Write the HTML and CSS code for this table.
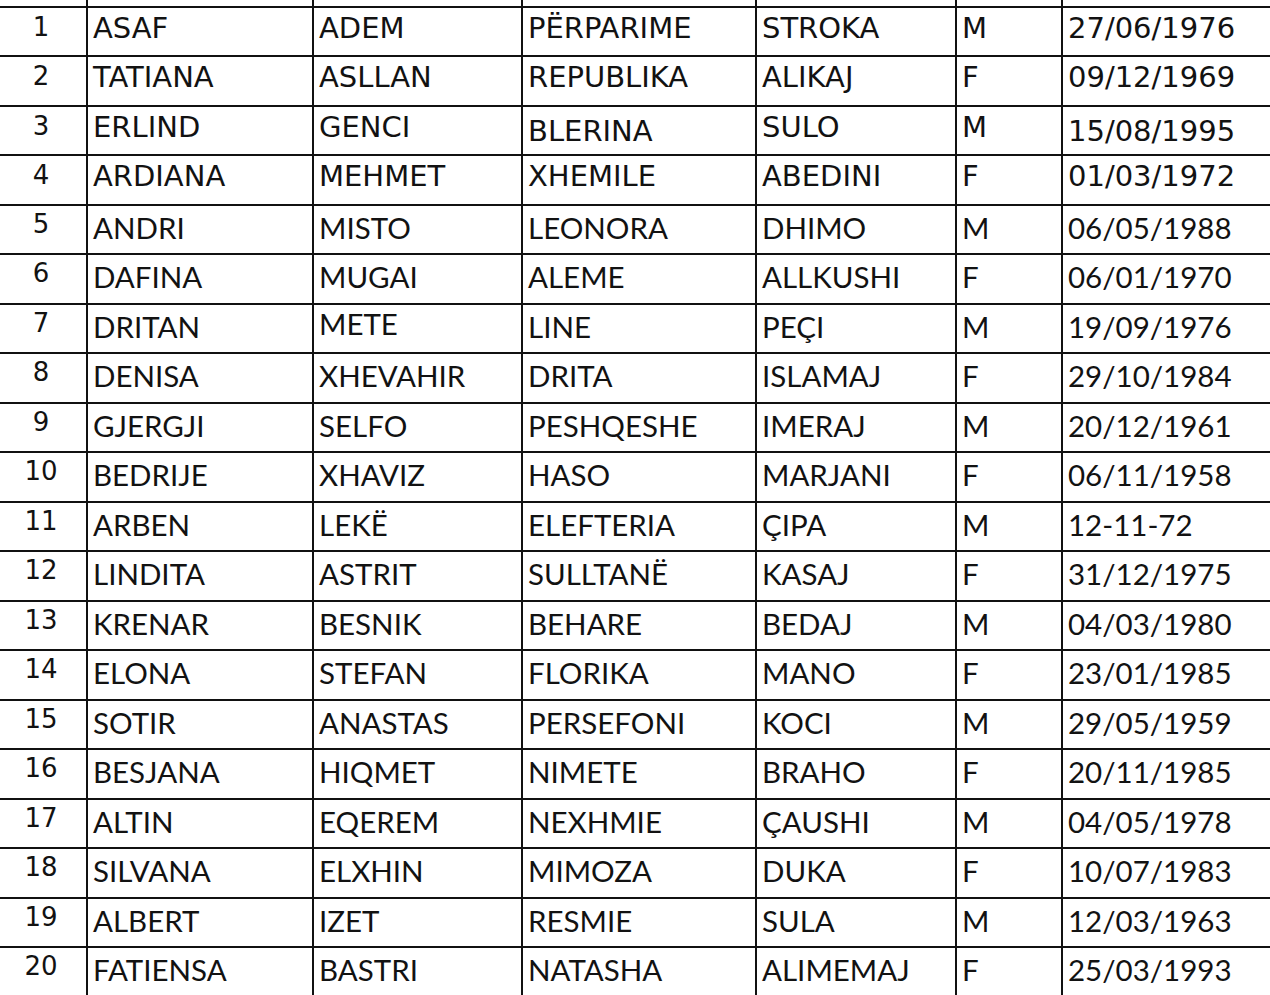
FILE: index.html
```html
<!DOCTYPE html>
<html lang="sq">
<head>
<meta charset="utf-8">
<title>Lista</title>
<link rel="stylesheet" href="styles.css">
</head>
<body>
<div class="sheet">
  <div class="row ghost"><div class="c num"></div><div class="c"></div><div class="c"></div><div class="c"></div><div class="c"></div><div class="c"></div><div class="c"></div></div>

  <div class="row t"><div class="c num">1</div><div class="c">ASAF</div><div class="c">ADEM</div><div class="c">PËRPARIME</div><div class="c">STROKA</div><div class="c">M</div><div class="c">27/06/1976</div></div>
  <div class="row t"><div class="c num">2</div><div class="c">TATIANA</div><div class="c">ASLLAN</div><div class="c">REPUBLIKA</div><div class="c">ALIKAJ</div><div class="c">F</div><div class="c">09/12/1969</div></div>
  <div class="row t"><div class="c num">3</div><div class="c">ERLIND</div><div class="c">GENCI</div><div class="c down">BLERINA</div><div class="c">SULO</div><div class="c">M</div><div class="c down">15/08/1995</div></div>
  <div class="row t"><div class="c num">4</div><div class="c">ARDIANA</div><div class="c">MEHMET</div><div class="c">XHEMILE</div><div class="c">ABEDINI</div><div class="c">F</div><div class="c">01/03/1972</div></div>

  <div class="row k"><div class="c num">5</div><div class="c">ANDRI</div><div class="c">MISTO</div><div class="c">LEONORA</div><div class="c">DHIMO</div><div class="c">M</div><div class="c">06/05/1988</div></div>
  <div class="row k"><div class="c num">6</div><div class="c">DAFINA</div><div class="c">MUGAI</div><div class="c">ALEME</div><div class="c">ALLKUSHI</div><div class="c">F</div><div class="c">06/01/1970</div></div>
  <div class="row k"><div class="c num">7</div><div class="c">DRITAN</div><div class="c up">METE</div><div class="c">LINE</div><div class="c">PEÇI</div><div class="c">M</div><div class="c">19/09/1976</div></div>
  <div class="row k"><div class="c num">8</div><div class="c">DENISA</div><div class="c">XHEVAHIR</div><div class="c">DRITA</div><div class="c">ISLAMAJ</div><div class="c">F</div><div class="c">29/10/1984</div></div>
  <div class="row k"><div class="c num">9</div><div class="c">GJERGJI</div><div class="c">SELFO</div><div class="c">PESHQESHE</div><div class="c">IMERAJ</div><div class="c">M</div><div class="c">20/12/1961</div></div>
  <div class="row k"><div class="c num">10</div><div class="c">BEDRIJE</div><div class="c">XHAVIZ</div><div class="c">HASO</div><div class="c">MARJANI</div><div class="c">F</div><div class="c">06/11/1958</div></div>
  <div class="row k"><div class="c num">11</div><div class="c">ARBEN</div><div class="c">LEKË</div><div class="c">ELEFTERIA</div><div class="c">ÇIPA</div><div class="c">M</div><div class="c">12-11-72</div></div>
  <div class="row k"><div class="c num">12</div><div class="c">LINDITA</div><div class="c">ASTRIT</div><div class="c">SULLTANË</div><div class="c">KASAJ</div><div class="c">F</div><div class="c">31/12/1975</div></div>
  <div class="row k"><div class="c num">13</div><div class="c">KRENAR</div><div class="c">BESNIK</div><div class="c">BEHARE</div><div class="c">BEDAJ</div><div class="c">M</div><div class="c">04/03/1980</div></div>
  <div class="row k"><div class="c num">14</div><div class="c">ELONA</div><div class="c">STEFAN</div><div class="c">FLORIKA</div><div class="c">MANO</div><div class="c">F</div><div class="c">23/01/1985</div></div>
  <div class="row k"><div class="c num">15</div><div class="c">SOTIR</div><div class="c">ANASTAS</div><div class="c">PERSEFONI</div><div class="c">KOCI</div><div class="c">M</div><div class="c">29/05/1959</div></div>
  <div class="row k"><div class="c num">16</div><div class="c">BESJANA</div><div class="c">HIQMET</div><div class="c">NIMETE</div><div class="c">BRAHO</div><div class="c">F</div><div class="c">20/11/1985</div></div>
  <div class="row k"><div class="c num">17</div><div class="c">ALTIN</div><div class="c">EQEREM</div><div class="c">NEXHMIE</div><div class="c">ÇAUSHI</div><div class="c">M</div><div class="c">04/05/1978</div></div>
  <div class="row k"><div class="c num">18</div><div class="c">SILVANA</div><div class="c">ELXHIN</div><div class="c">MIMOZA</div><div class="c">DUKA</div><div class="c">F</div><div class="c">10/07/1983</div></div>
  <div class="row k"><div class="c num">19</div><div class="c">ALBERT</div><div class="c">IZET</div><div class="c">RESMIE</div><div class="c">SULA</div><div class="c">M</div><div class="c">12/03/1963</div></div>
  <div class="row k"><div class="c num">20</div><div class="c">FATIENSA</div><div class="c">BASTRI</div><div class="c">NATASHA</div><div class="c">ALIMEMAJ</div><div class="c">F</div><div class="c">25/03/1993</div></div>
</div>
</body>
</html>
```

FILE: styles.css
```css
html, body {
  margin: 0;
  padding: 0;
  background: #ffffff;
  overflow: hidden;
}

body {
  width: 1270px;
  height: 995px;
  color: #121212;
  font-family: "DejaVu Sans", Verdana, sans-serif;
}

.sheet {
  width: 1303px;
  margin-top: -42px;
}

.row {
  display: grid;
  grid-template-columns: 88px 226px 209px 234px 200px 106px 240px;
  height: 49.5px;
}

.c {
  box-sizing: border-box;
  border-right: 2px solid #111111;
  border-bottom: 2px solid #111111;
  padding-left: 5px;
  white-space: nowrap;
  overflow: hidden;
}

.c.num {
  padding-left: 0;
  padding-right: 4px;
  text-align: center;
  font-family: "DejaVu Sans", Verdana, sans-serif;
  font-size: 26px;
  line-height: normal;
  padding-top: 3px;
}

.row.t .c {
  font-family: "DejaVu Sans", Verdana, sans-serif;
  font-size: 29px;
  padding-top: 3px;
}

.row.t .c.num {
  font-size: 26px;
  padding-top: 4px;
}

.row.k .c {
  font-family: Lato, "Open Sans", sans-serif;
  font-size: 29.5px;
  padding-top: 4px;
}

.row.k .c.num {
  font-family: "DejaVu Sans", Verdana, sans-serif;
  font-size: 26px;
  padding-top: 3px;
}

.row .c.down {
  padding-top: 7px;
}

.row .c.up {
  padding-top: 1px;
}
```
